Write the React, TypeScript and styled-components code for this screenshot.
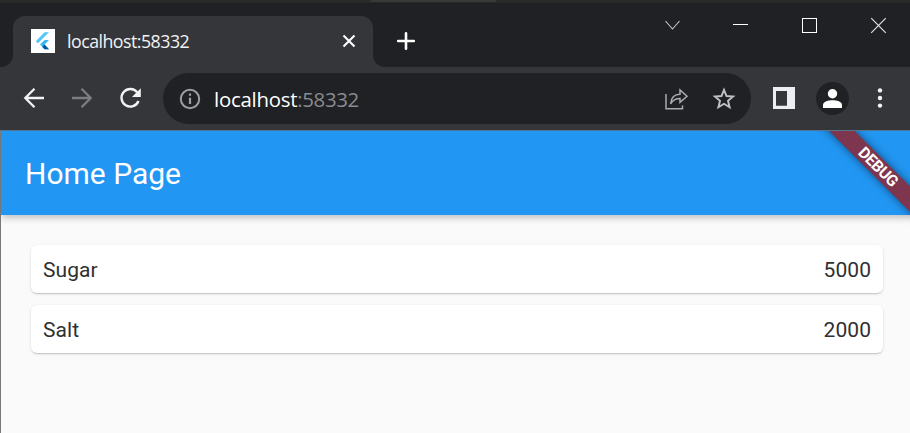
import React from "react";
import styled, { createGlobalStyle } from "styled-components";

const GlobalStyle = createGlobalStyle`
  * { box-sizing: border-box; }
  body { margin: 0; background: #fafafa; overflow: hidden; }
`;

const Browser = styled.div`
  width: 910px;
  height: 433px;
  display: flex;
  flex-direction: column;
  overflow: hidden;
  background: #35363a;
  font-family: "Open Sans", "Noto Sans", sans-serif;
`;

const TitleBar = styled.header`
  height: 67px;
  flex: none;
  display: flex;
  align-items: flex-start;
  background:
    linear-gradient(90deg, transparent 371px, #383938 371px, #383938 496px, transparent 496px) 0 0 / 100% 2px no-repeat,
    linear-gradient(#2b2c2b 0, #2b2c2b 2px, #202124 3px);
  padding: 16px 0 0 1px;
`;

const TabFoot = styled.div<{ $side: "left" | "right" }>`
  width: 12px;
  height: 12px;
  align-self: flex-end;
  background: radial-gradient(
    circle at ${(p) => (p.$side === "left" ? "0 0" : "100% 0")},
    transparent 11.5px,
    #35363a 12.5px
  );
`;

const Tab = styled.div`
  width: 360px;
  height: 51px;
  display: flex;
  align-items: center;
  padding: 0 16px 1px 18px;
  border-radius: 12px 12px 0 0;
  background: #35363a;
`;

const Favicon = styled.svg`
  width: 24px;
  height: 24px;
  flex: none;
  background: #fff;
`;

const TabTitle = styled.span`
  margin-left: 12px;
  flex: 1;
  color: #f1f3f4;
  font-size: 17.8px;
  line-height: 24px;
  padding-bottom: 1px;
  letter-spacing: -0.52px;
  white-space: nowrap;
`;

const Glyph = styled.svg<{ $w: number; $h?: number; $left?: number; $top?: number }>`
  display: block;
  flex: none;
  width: ${(p) => p.$w}px;
  height: ${(p) => p.$h ?? p.$w}px;
  margin-left: ${(p) => p.$left ?? 0}px;
  margin-top: ${(p) => p.$top ?? 0}px;
  overflow: visible;
`;

const WindowControls = styled.div`
  margin-left: auto;
  padding-right: 24px;
  display: flex;
  align-items: flex-start;
`;

const Toolbar = styled.nav`
  height: 63px;
  flex: none;
  display: flex;
  align-items: center;
  padding: 0 16px 0 22px;
`;

const AddressBar = styled.div`
  width: 588px;
  height: 51px;
  margin-left: 21px;
  display: flex;
  align-items: center;
  padding: 0 16px 0 16px;
  border-radius: 26px;
  background: #202124;
`;

const Address = styled.div`
  margin-left: 13px;
  flex: 1;
  font-size: 20.4px;
  line-height: 28px;
  letter-spacing: -0.25px;
  color: #fff;
  white-space: nowrap;
`;

const Port = styled.span`
  color: #898b8e;
  letter-spacing: -0.32px;
`;

const Avatar = styled.div`
  width: 33px;
  height: 33px;
  margin-left: 21px;
  display: flex;
  align-items: center;
  justify-content: center;
  border-radius: 50%;
  background: #202124;
`;

const Page = styled.main`
  position: relative;
  flex: 1;
  display: flex;
  flex-direction: column;
  border-left: 1px solid #77787a;
  border-top: 1px solid #55758f;
  background: #fafafa;
  font-family: Roboto, sans-serif;
  overflow: hidden;
`;

const AppBar = styled.div`
  height: 84px;
  flex: none;
  display: flex;
  align-items: center;
  padding: 2px 24px 0;
  background: #2196f3;
  box-shadow: 0 3px 6px -1px rgba(0, 0, 0, 0.15), 0 5px 7px rgba(0, 0, 0, 0.06),
    0 1px 12px rgba(0, 0, 0, 0.06);
`;

const Title = styled.h1`
  margin: 0;
  color: #fff;
  font-size: 30px;
  font-weight: 400;
  line-height: 36px;
`;

const List = styled.div`
  display: flex;
  flex-direction: column;
  gap: 12px;
  padding: 30px 27px 0 30px;
`;

const Card = styled.div`
  height: 48px;
  display: flex;
  align-items: center;
  justify-content: space-between;
  padding: 2px 12px 0;
  border-radius: 6px;
  background: #fff;
  color: #303030;
  font-size: 21px;
  line-height: 24px;
  letter-spacing: 0.05px;
  box-shadow: 0 2px 1px -1px rgba(0, 0, 0, 0.1), 0 1px 2px rgba(0, 0, 0, 0.1),
    0 1px 4px rgba(0, 0, 0, 0.06);
`;

const DebugRibbon = styled.div`
  position: absolute;
  top: 26.5px;
  right: -93px;
  width: 250px;
  height: 18px;
  transform: rotate(45deg);
  background: #7e364e;
  box-shadow: 0 0 9px rgba(0, 0, 0, 0.5);
  color: #fff;
  font-size: 15.8px;
  font-weight: 700;
  line-height: 18px;
  letter-spacing: -0.4px;
  text-align: center;
`;

const items = [
  { name: "Sugar", amount: 5000 },
  { name: "Salt", amount: 2000 },
];

export default function App() {
  return (
    <>
      <GlobalStyle />
      <Browser>
        <TitleBar>
          <TabFoot $side="left" />
          <Tab>
            <Favicon viewBox="0 0 24 24">
              <path d="M4.8 12.2L13.6 3.3H18L7 14.3Z" fill="#54c5f8" />
              <path d="M9 15.6L13.6 11.1H18L13.5 15.6L18 20.2H13.6Z" fill="#38b6f1" />
              <path d="M11.3 17.9L13.5 15.6L18 20.2H13.6Z" fill="#01579b" />
            </Favicon>
            <TabTitle>localhost:58332</TabTitle>
            <Glyph $w={16} viewBox="0 0 16 16" stroke="#fff" strokeWidth="2.1">
              <path d="M2.5 2.5L13.5 13.5M13.5 2.5L2.5 13.5" />
            </Glyph>
          </Tab>
          <TabFoot $side="right" />
          <Glyph $w={18} $left={12} $top={16} viewBox="0 0 18 18" stroke="#fff" strokeWidth="2.6" strokeLinecap="round">
            <path d="M9 1.2V16.8M1.2 9H16.8" />
          </Glyph>
          <WindowControls>
            <Glyph $w={15} $h={10} $top={4} viewBox="0 0 15 10" stroke="#c9cacb" strokeWidth="1.1" fill="none">
              <path d="M.5 1L7.5 9L14.5 1" />
            </Glyph>
            <Glyph $w={15} $h={1} $left={53} $top={8} viewBox="0 0 15 1" fill="#fff">
              <rect width="15" height="1" />
            </Glyph>
            <Glyph $w={15} $left={54} $top={2} viewBox="0 0 15 15" stroke="#fff" fill="none">
              <rect x=".5" y=".5" width="14" height="14" />
            </Glyph>
            <Glyph $w={15} $left={54} $top={2} viewBox="0 0 15 15" stroke="#e0e0e2" strokeWidth="1.2">
              <path d="M.2 .2L14.8 14.8M14.8 .2L.2 14.8" />
            </Glyph>
          </WindowControls>
        </TitleBar>
        <Toolbar>
          <Glyph $w={24} $top={-2} viewBox="0 0 24 24" stroke="#f1f3f4" strokeWidth="2.3" fill="none">
            <path d="M22 12H4M12.5 2.8L3.3 12L12.5 21.2" />
          </Glyph>
          <Glyph $w={24} $left={24} $top={-2} viewBox="0 0 24 24" stroke="#7d7e81" strokeWidth="2.3" fill="none">
            <path d="M2 12H20M11.5 2.8L20.7 12L11.5 21.2" />
          </Glyph>
          <Glyph $w={24} $left={24} $top={-1} viewBox="0 0 24 24" fill="none">
            <path d="M19.2 6.3A8.8 8.8 0 1 0 20.5 15" stroke="#f1f3f4" strokeWidth="2.4" />
            <path d="M22.8 2.2V11H14Z" fill="#f1f3f4" />
          </Glyph>
          <AddressBar>
            <Glyph $w={22} $top={1} viewBox="0 0 22 22" stroke="#9aa0a6" strokeWidth="2" fill="none">
              <circle cx="11" cy="11" r="9.2" />
              <path d="M11 9.8V16M11 5.5V7.7" strokeWidth="2.2" />
            </Glyph>
            <Address>
              localhost<Port>:58332</Port>
            </Address>
            <Glyph $w={23} $h={22} viewBox="0 0 23 22" stroke="#a9abad" strokeWidth="1.5" fill="none">
              <path d="M1 6V20.8H17.5V17.5" />
              <path d="M5.6 16C6 10 9.5 6.3 15 6.2V2L22 8.2L15 14.3V10.5C10.5 10.5 7.8 12 5.6 16Z" />
            </Glyph>
            <Glyph $w={22} $left={25} viewBox="0 0 22 22" stroke="#bfc1c3" strokeWidth="1.9" fill="none">
              <path d="M11 1.8L13.5 8L20.1 8.5L15 12.8L16.6 19.3L11 15.8L5.4 19.3L7 12.8L1.9 8.5L8.5 8Z" />
            </Glyph>
          </AddressBar>
          <Glyph $w={22} $left={22} $top={-1} viewBox="0 0 22 22" fill="#eceef3">
            <path fillRule="evenodd" d="M0 0H22V22H0ZM3 4V18.7H14V4Z" />
          </Glyph>
          <Avatar>
            <Glyph $w={19} viewBox="0 0 19 19" fill="#fff">
              <circle cx="9.5" cy="4.7" r="4.7" />
              <path d="M0 19V16C0 12.7 5.5 11.3 9.5 11.3S19 12.7 19 16V19Z" />
            </Glyph>
          </Avatar>
          <Glyph $w={6} $h={20} $left={28} $top={-1} viewBox="0 0 6 20" fill="#f1f3f4">
            <circle cx="3" cy="2.4" r="2.2" />
            <circle cx="3" cy="10" r="2.2" />
            <circle cx="3" cy="17.6" r="2.2" />
          </Glyph>
        </Toolbar>
        <Page>
          <AppBar>
            <Title>Home Page</Title>
          </AppBar>
          <List>
            {items.map((item) => (
              <Card key={item.name}>
                <span>{item.name}</span>
                <span>{item.amount}</span>
              </Card>
            ))}
          </List>
          <DebugRibbon>DEBUG</DebugRibbon>
        </Page>
      </Browser>
    </>
  );
}
